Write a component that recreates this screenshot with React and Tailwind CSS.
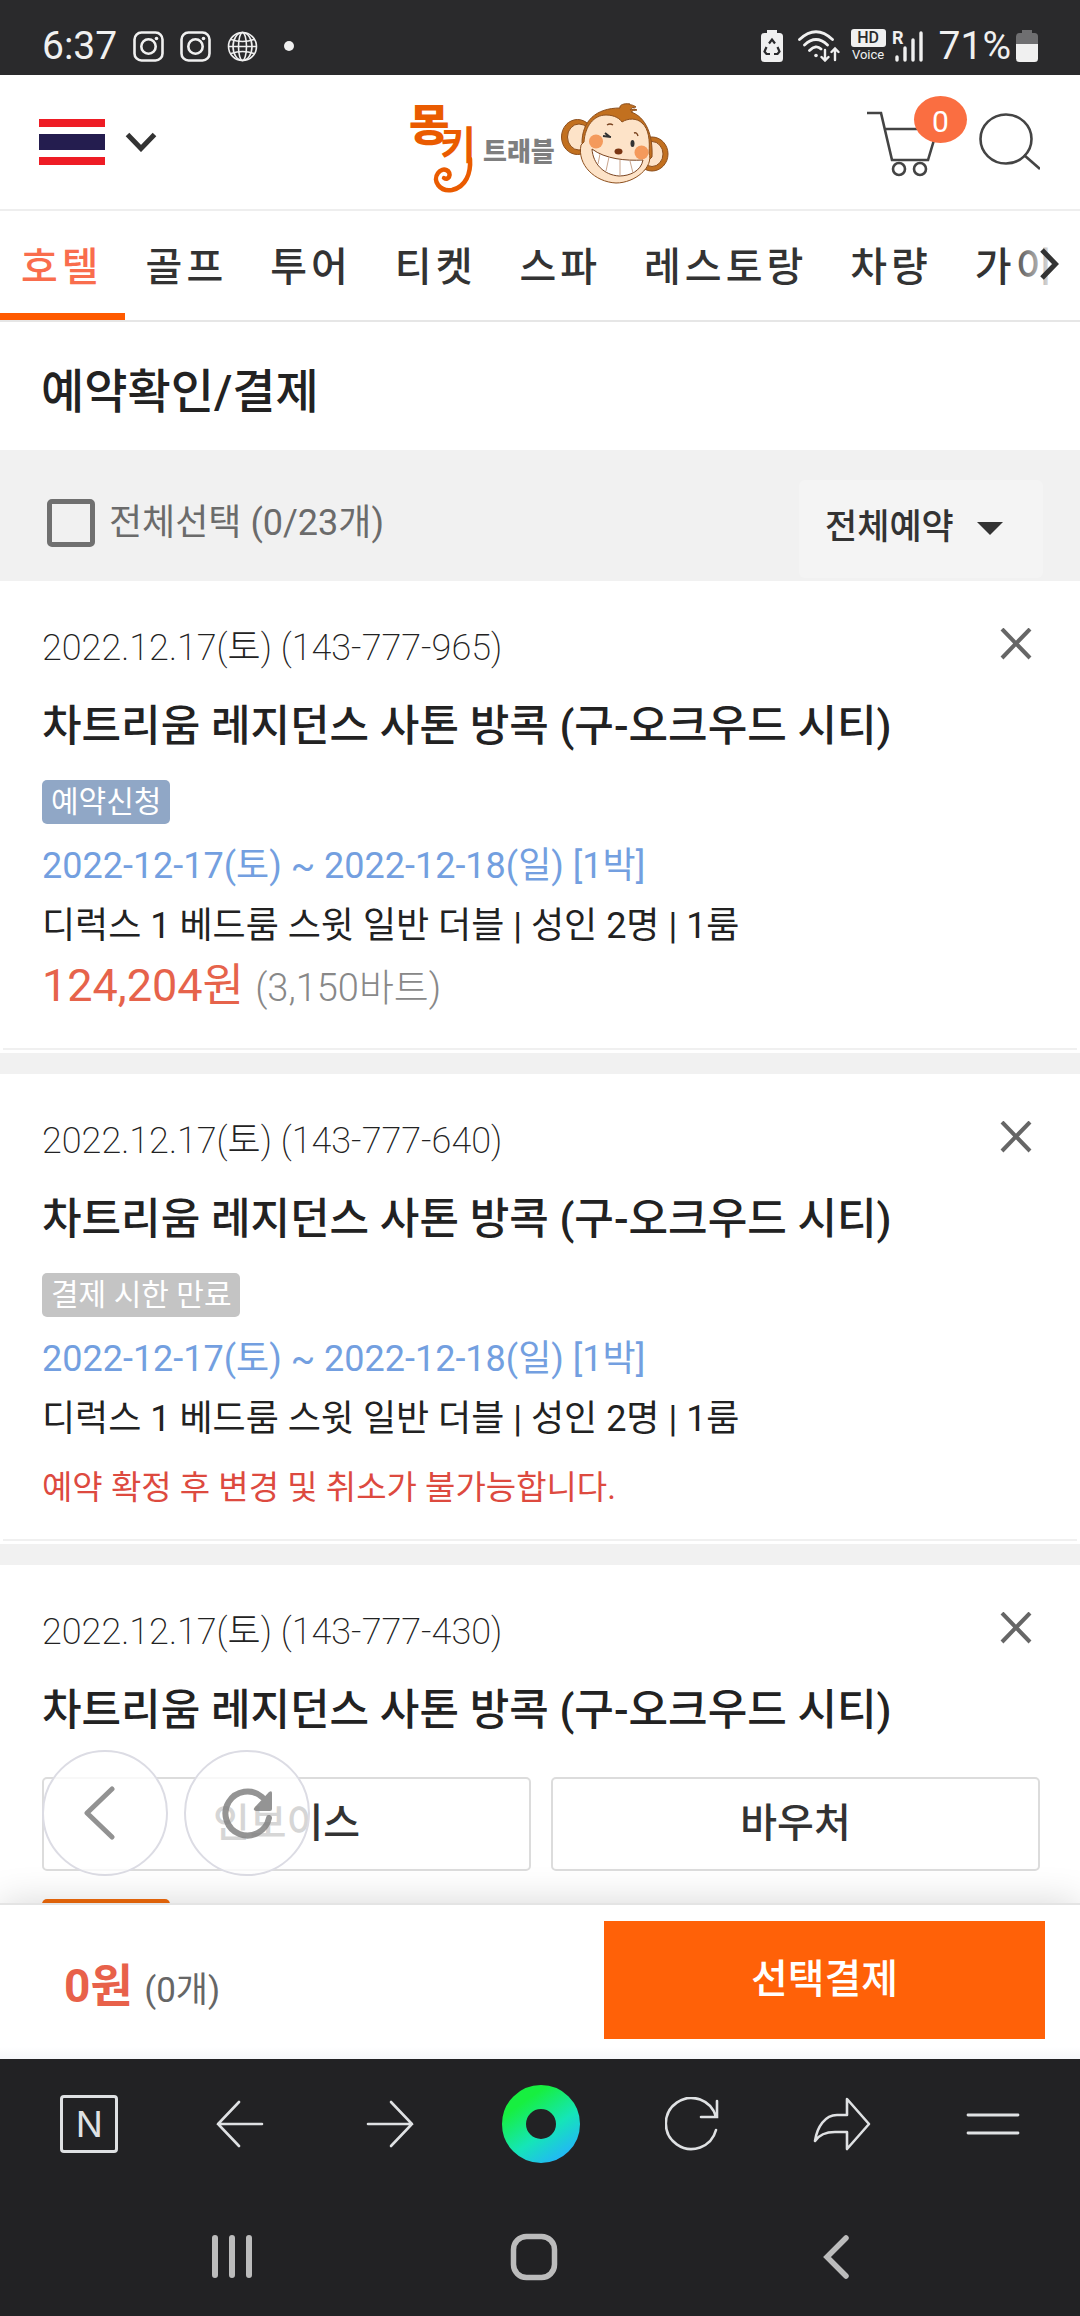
import React from "react";

const tabs = ["호텔", "골프", "투어", "티켓", "스파", "레스토랑", "차량", "가이드"];

const bookings = [
  {
    code: "143-777-965",
    status: "예약신청",
    statusColor: "bg-[#90a7c6]",
    price: "124,204원",
    localPrice: "(3,150바트)",
  },
  {
    code: "143-777-640",
    status: "결제 시한 만료",
    statusColor: "bg-[#c4c4c4]",
    notice: "예약 확정 후 변경 및 취소가 불가능합니다.",
  },
  {
    code: "143-777-430",
    status: "예약확정",
    statusColor: "bg-[#f06a0a]",
    documents: true,
    price: "124,204원",
    localPrice: "(3,150바트)",
  },
];

const InstagramIcon = () => (
  <svg width="31" height="31" viewBox="0 0 31 31" fill="none" stroke="#f0f0f0" strokeWidth="2.6">
    <rect x="1.5" y="1.5" width="28" height="28" rx="7" />
    <circle cx="15.5" cy="15.5" r="7.2" />
    <circle cx="23.5" cy="7.5" r="1.8" fill="#f0f0f0" stroke="none" />
  </svg>
);

const GlobeIcon = () => (
  <svg width="31" height="31" viewBox="0 0 31 31" fill="none" stroke="#f0f0f0" strokeWidth="1.6">
    <circle cx="15.5" cy="15.5" r="14" />
    <ellipse cx="15.5" cy="15.5" rx="9.5" ry="14" />
    <ellipse cx="15.5" cy="15.5" rx="4" ry="14" />
    <path d="M1.5 15.5h28M4 8.5q11.5 4 23 0M4 22.5q11.5-4 23 0" />
  </svg>
);

const StatusBar = () => (
  <div className="flex h-[75px] shrink-0 items-center justify-between bg-[#2a2a2c] pt-[17px] pr-[42px] pl-[42px] text-[#f0f0f0]">
    <div className="flex items-center gap-4">
      <span className="text-[39px] leading-none">6:37</span>
      <InstagramIcon />
      <InstagramIcon />
      <GlobeIcon />
      <span className="ml-[10px] size-[10px] rounded-full bg-[#f0f0f0]" />
    </div>
    <div className="flex items-center">
      <svg className="mr-[15px]" width="22" height="32" viewBox="0 0 22 32">
        <path d="M6 0h10v3h2.5q3.5 0 3.5 3.5v22q0 3.5-3.5 3.5h-15Q0 32 0 28.5v-22Q0 3 3.5 3H6z" fill="#f0f0f0" />
        <path d="M8 13.5 11 9.5l3 4M5.5 17 3.5 21.5 5.5 24H9M16.5 17l2 4.5-2 2.5H13" fill="none" stroke="#2a2a2c" strokeWidth="2.2" />
      </svg>
      <svg className="mr-[11px]" width="42" height="32" viewBox="0 0 42 32" fill="none" stroke="#f0f0f0" strokeWidth="2.8" strokeLinecap="round">
        <path d="M1.5 9.5Q18-6 34.5 9.5M6.5 15Q18 4 29.5 15M11.5 20.5Q18 14 23 19" />
        <circle cx="18" cy="25.5" r="1.8" fill="#f0f0f0" stroke="none" />
        <path d="M27 20v10M23.5 27l3.5 3.5 3.5-3.5M37 30V19M33.5 22l3.5-3.5 3.5 3.5" strokeWidth="2.4" />
      </svg>
      <div className="mr-[6px] flex w-[35px] flex-col items-center">
        <span className="w-full rounded-[3px] bg-[#f0f0f0] text-center text-[16px] leading-[18px] font-medium text-[#2a2a2c]">HD</span>
        <span className="text-[13px] leading-[16px]">Voice</span>
      </div>
      <svg className="mr-[15px]" width="32" height="32" viewBox="0 0 32 32">
        <text x="0" y="14" fill="#f0f0f0" fontFamily="Roboto" fontWeight="700" fontSize="18">R</text>
        <path d="M5 27v3M13 18v12M21 10v20M29 3v27" stroke="#f0f0f0" strokeWidth="3.4" strokeLinecap="round" />
      </svg>
      <span className="mr-[5px] text-[39px] leading-none">71%</span>
      <svg width="22" height="32" viewBox="0 0 22 32">
        <path d="M6 0h10v3h2.5q3.5 0 3.5 3.5V15H0V6.5Q0 3 3.5 3H6z" fill="#6f6f71" />
        <path d="M0 14h22v14.5q0 3.5-3.5 3.5h-15Q0 32 0 28.5z" fill="#f0f0f0" />
      </svg>
    </div>
  </div>
);

const Logo = () => (
  <svg className="overflow-visible" width="256" height="134" viewBox="0 0 256 134" fontFamily="'Noto Sans CJK KR', sans-serif">
    <text x="-3" y="66" fontSize="44" fontWeight="900" fill="#ea5b00">몽</text>
    <text x="28" y="84" fontSize="39" fontWeight="700" fill="#ea5b00">키</text>
    <path d="M58 84C59 98 54 112 40 115C28 117 20 106 26 98C31 91 40 96 37 102Q35 105 32 103" fill="none" stroke="#ea5b00" strokeWidth="4.5" strokeLinecap="round" />
    <text x="71" y="86" fontSize="26" fontWeight="900" fill="#7f7f7f">트래블</text>
    <g stroke="#8d4f1d" strokeWidth="1">
      <ellipse cx="165.5" cy="62" rx="16" ry="17.5" fill="#c2701f" />
      <ellipse cx="167" cy="62" rx="11.5" ry="13" fill="#fde3c8" />
      <ellipse cx="240" cy="79" rx="16" ry="17" fill="#c2701f" />
      <ellipse cx="240" cy="79" rx="11" ry="12.5" fill="#fde3c8" />
      <path d="M170 68C170 46 184 33 208 33C207 30 212 28 218 29C216 30 220 29 224 32Q219 32 218 35Q223 33 225 35Q221 35 219 37C234 42 241 60 240 82L226 96L180 90z" fill="#c2701f" />
      <path d="M172 67C173 51 182 40 194 40C203 40 208 44 210 47C216 43 225 43 230 48C237 54 238 66 237 78C242 92 223 108 204 108C183 107 165 90 169 70z" fill="#fde3c8" />
      <path d="M180 74C193 84 214 86 231 85C229 96 218 101 207 101C192 100 181 89 180 74z" fill="#fff" stroke="#7a4420" />
    </g>
    <path d="M188 79L186 89M197 82L194 96M208 85V101M218 86L221 98" fill="none" stroke="#c9a58d" strokeWidth="1" />
    <circle cx="184" cy="66.5" r="7" fill="#f49a5c" />
    <circle cx="229.5" cy="77.5" r="7" fill="#f49a5c" />
    <ellipse cx="206.5" cy="76.5" rx="4" ry="3" fill="#7a3512" />
    <ellipse cx="220.5" cy="68.5" rx="2" ry="3.5" fill="#333" />
    <path d="M191 61L199 62M193 58L198 62" stroke="#333" strokeWidth="2" />
    <path d="M195 50Q198 48 201 50M222 58Q225 57 226 61" fill="none" stroke="#7a4420" strokeWidth="1.4" />
  </svg>
);

const Header = () => (
  <header className="grid shrink-0 grid-cols-[1fr_auto_1fr] items-center border-b-2 border-[#eee] pr-10 pl-[39px]">
    <button type="button" aria-label="태국" className="flex items-center gap-5 justify-self-start">
      <svg width="66" height="46" viewBox="0 0 66 46">
        <path d="M0 0h66v8H0zM0 38h66v8H0z" fill="#ee1c25" />
        <path d="M0 15h66v16H0z" fill="#241d4f" />
      </svg>
      <svg width="32" height="20" viewBox="0 0 32 20">
        <path d="M2.5 2.5L16 16.5L29.5 2.5" fill="none" stroke="#333" strokeWidth="5" />
      </svg>
    </button>
    <a href="#" aria-label="몽키 트래블"><Logo /></a>
    <div className="flex items-center gap-3 justify-self-end">
      <a href="#" aria-label="장바구니" className="relative block">
        <svg width="100" height="92" viewBox="0 0 100 92" fill="none" stroke="#444" strokeWidth="2.6">
          <path d="M0 17H14L25 64H61L70 34M18 33H50" />
          <circle cx="32" cy="73" r="6" />
          <circle cx="53" cy="73" r="6" />
        </svg>
        <span className="absolute top-0 right-0 flex h-[47px] w-[53px] items-center justify-center rounded-[50%] bg-[#fa6e41] pt-1 text-[30px] leading-none text-white">
          0
        </span>
      </a>
      <button type="button" aria-label="검색">
        <svg width="61" height="92" viewBox="0 0 61 92" fill="none" stroke="#444" strokeWidth="2.6">
          <ellipse cx="27" cy="43" rx="25.5" ry="24.5" />
          <path d="M45 59L61 73" />
        </svg>
      </button>
    </div>
  </header>
);

const Tabs = () => (
  <nav className="relative shrink-0 overflow-hidden border-b-2 border-[#e6e6e6]">
    <div className="flex">
      {tabs.map((tab, i) => (
        <a
          key={tab}
          href="#"
          className={
            i === 0
              ? "shrink-0 border-b-7 border-[#ff5a00] pt-3 pr-[22px] pl-[21px] text-[40px] leading-[90px] font-medium tracking-widest text-[#f96d4d]"
              : "shrink-0 border-b-7 border-transparent pt-3 pr-[22px] pl-[21px] text-[40px] leading-[90px] font-medium tracking-widest text-[#333]"
          }
        >
          {tab}
        </a>
      ))}
    </div>
    <button
      type="button"
      aria-label="다음"
      className="absolute top-0 right-0 flex h-full w-[72px] items-center justify-end bg-linear-to-r from-transparent to-white to-70% pr-[21px] pb-1"
    >
      <svg width="19" height="32" viewBox="0 0 19 32">
        <path d="M2 2L15.5 16L2 30" fill="none" stroke="#333" strokeWidth="5" />
      </svg>
    </button>
  </nav>
);

const BookingCard = ({ booking }) => (
  <li className="border-b-[21px] border-[#f1f1f1] bg-white pb-[3px]">
    <article className="mx-[3px] border-b-2 border-[#f0f0f0] pt-10 pr-[37px] pl-[39px]">
      <div className="flex items-center justify-between">
        <p className="text-[36px] leading-[54px] font-extralight text-[#222]">2022.12.17(토) ({booking.code})</p>
        <button type="button" aria-label="삭제" className="mr-2">
          <svg width="32" height="40" viewBox="0 0 32 40">
            <path d="M2 1L30 30M30 1L2 30" stroke="#666" strokeWidth="4" />
          </svg>
        </button>
      </div>
      <h2 className="mt-[21px] text-[43px] leading-[60px] font-medium text-[#222]">
        차트리움 레지던스 사톤 방콕 (구-오크우드 시티)
      </h2>
      {booking.documents && (
        <div className="mt-[37px] mb-7 grid grid-cols-2 gap-5">
          <button type="button" className="h-[94px] rounded-[5px] border-2 border-[#dcdcdc] text-[40px] font-medium text-[#333]">
            인보이스
          </button>
          <button type="button" className="h-[94px] rounded-[5px] border-2 border-[#dcdcdc] text-[40px] font-medium text-[#333]">
            바우처
          </button>
        </div>
      )}
      <div className={booking.documents ? "flex" : "mt-6 flex"}>
        <span className={`rounded-[5px] px-[9px] text-[30px] leading-[44px] text-white ${booking.statusColor}`}>{booking.status}</span>
      </div>
      <p className="mt-3 text-[36px] leading-[60px] text-[#739fe0]">2022-12-17(토) ~ 2022-12-18(일) [1박]</p>
      <p className="text-[36px] leading-[60px] text-[#222]">디럭스 1 베드룸 스윗 일반 더블 | 성인 2명 | 1룸</p>
      {booking.notice ? (
        <p className="pb-3 text-[33px] leading-[78px] text-[#dd4a3f]">{booking.notice}</p>
      ) : (
        <p className="pb-[30px] text-[45px] leading-[60px] text-[#e6634b]">
          {booking.price} <span className="text-[38px] font-light text-[#888]">{booking.localPrice}</span>
        </p>
      )}
    </article>
  </li>
);

const FloatingButtons = () => (
  <div className="absolute bottom-[27px] left-[42px] flex gap-4">
    <button type="button" aria-label="이전 페이지" className="flex size-[126px] items-center justify-center rounded-full border-2 border-[#dcdce4] bg-white/80">
      <svg className="mr-3" width="32" height="54" viewBox="0 0 32 54">
        <path d="M29 3L4 27L29 51" fill="none" stroke="#929292" strokeWidth="5" strokeLinecap="round" strokeLinejoin="round" />
      </svg>
    </button>
    <button type="button" aria-label="새로고침" className="flex size-[126px] items-center justify-center rounded-full border-2 border-[#dcdce4] bg-white/80">
      <svg width="54" height="54" viewBox="0 0 54 54" opacity="0.85">
        <path d="M49 32A22 22 0 1 1 42 11" fill="none" stroke="#828282" strokeWidth="6" strokeLinecap="round" />
        <path d="M52 7V23Q52 25 50 25H36Q32 24 35 21L49 6Q52 4 52 7z" fill="#828282" />
      </svg>
    </button>
  </div>
);

const PayBar = () => (
  <div className="relative flex shrink-0 items-center justify-between border-t-2 border-[#e4e4e4] bg-linear-to-b from-white from-92% to-[#f6f7fa] pt-4 pr-[35px] pb-5 pl-16 shadow-[0_0_36px_rgba(0,0,0,0.16)]">
    <p className="pt-4 text-[46px] leading-[60px] font-bold text-[#e8614a]">
      0원 <span className="text-[35px] font-normal text-[#666]">(0개)</span>
    </p>
    <button type="button" className="h-[118px] w-[441px] bg-[#ff6108] text-[40px] font-medium text-white">
      선택결제
    </button>
  </div>
);

const BrowserBar = () => (
  <div className="relative grid h-[130px] shrink-0 grid-cols-7 place-items-center bg-[#222224] pr-[12px] pl-[14px] text-[#dfe1e3]">
    <button type="button" aria-label="네이버" className="flex size-[58px] items-center justify-center rounded-[4px] border-[3px] border-[#dfe1e3] font-[Inter] text-[36px] leading-none">
      N
    </button>
    <button type="button" aria-label="뒤로">
      <svg width="48" height="48" viewBox="0 0 48 48" fill="none" stroke="currentColor" strokeWidth="2.6" strokeLinecap="round">
        <path d="M46 24H2M23 2L2 24L23 46" />
      </svg>
    </button>
    <button type="button" aria-label="앞으로">
      <svg width="48" height="48" viewBox="0 0 48 48" fill="none" stroke="currentColor" strokeWidth="2.6" strokeLinecap="round">
        <path d="M2 24H46M25 2L46 24L25 46" />
      </svg>
    </button>
    <button type="button" aria-label="그린닷">
      <svg width="78" height="78" viewBox="0 0 78 78">
        <defs>
          <linearGradient id="ring" gradientUnits="userSpaceOnUse" x1="18" y1="10" x2="60" y2="72">
            <stop offset="0.1" stopColor="#17ef40" />
            <stop offset="0.6" stopColor="#15e5b8" />
            <stop offset="1" stopColor="#22b8f5" />
          </linearGradient>
        </defs>
        <circle cx="39" cy="39" r="27" fill="none" stroke="url(#ring)" strokeWidth="24" />
      </svg>
    </button>
    <button type="button" aria-label="새로고침">
      <svg width="54" height="54" viewBox="0 0 54 54" fill="none" stroke="currentColor" strokeWidth="2.6" strokeLinecap="round">
        <path d="M51 33A25.5 25.5 0 1 1 51 20M36 20H52V4" />
      </svg>
    </button>
    <button type="button" aria-label="공유">
      <svg width="58" height="54" viewBox="0 0 58 54" fill="none" stroke="currentColor" strokeWidth="2.6" strokeLinejoin="round">
        <path d="M34 2L56 27L34 52V35H22C13 35 6 38 2 44C4 30 12 18 24 18H34z" />
      </svg>
    </button>
    <button type="button" aria-label="메뉴">
      <svg width="54" height="24" viewBox="0 0 54 24" stroke="currentColor" strokeWidth="2.8" strokeLinecap="round">
        <path d="M2 3H52M2 21H52" />
      </svg>
    </button>
  </div>
);

const SystemBar = () => (
  <div className="grid h-[127px] shrink-0 grid-cols-3 place-items-center bg-[#222224] pt-2 pr-[93px] pl-[81px] text-[#bcbcbc]">
    <button type="button" aria-label="최근 앱">
      <svg width="42" height="46" viewBox="0 0 42 46" stroke="currentColor" strokeWidth="6" strokeLinecap="round">
        <path d="M4 4V41M21 4V41M38 4V41" />
      </svg>
    </button>
    <button type="button" aria-label="홈">
      <svg width="48" height="48" viewBox="0 0 48 48" fill="none" stroke="currentColor" strokeWidth="5.5">
        <rect x="3.5" y="3.5" width="41" height="41" rx="13" />
      </svg>
    </button>
    <button type="button" aria-label="뒤로 가기">
      <svg width="28" height="46" viewBox="0 0 28 46" fill="none" stroke="currentColor" strokeWidth="5.5" strokeLinecap="round">
        <path d="M24 4L5 23L24 42" />
      </svg>
    </button>
  </div>
);

const App = () => {
  return (
    <div className="flex h-screen flex-col overflow-hidden bg-white font-[Roboto,'Noto_Sans_CJK_KR',sans-serif]">
      <StatusBar />
      <Header />
      <Tabs />
      <main className="relative min-h-0 flex-1">
        <div className="h-full overflow-y-auto [scrollbar-width:none]">
          <h1 className="pt-3 pl-[41px] text-[47px] leading-[116px] font-medium text-[#222]">예약확인/결제</h1>
          <div className="flex h-[131px] items-center justify-between bg-[#f1f1f1] pt-[14px] pr-[37px] pl-[47px]">
            <label className="flex items-center gap-[14px] text-[36px] leading-none text-[#6b6b6b]">
              <input type="checkbox" className="size-12 appearance-none rounded-[5px] border-[5px] border-[#707070]" />
              전체선택 (0/23개)
            </label>
            <div className="relative mt-3 flex items-center">
              <select
                aria-label="예약 상태"
                className="h-[98px] w-[244px] appearance-none rounded-[6px] bg-[#f4f4f4] pl-[26px] text-[35px] font-medium text-[#333]"
              >
                <option>전체예약</option>
                <option>예약신청</option>
                <option>예약확정</option>
              </select>
              <svg className="pointer-events-none absolute right-10" width="26" height="13" viewBox="0 0 26 13">
                <path d="M0 0H26L13 13z" fill="#333" />
              </svg>
            </div>
          </div>
          <ul>
            {bookings.map((booking) => (
              <BookingCard key={booking.code} booking={booking} />
            ))}
          </ul>
        </div>
        <FloatingButtons />
      </main>
      <PayBar />
      <BrowserBar />
      <SystemBar />
    </div>
  );
};

export default App;
